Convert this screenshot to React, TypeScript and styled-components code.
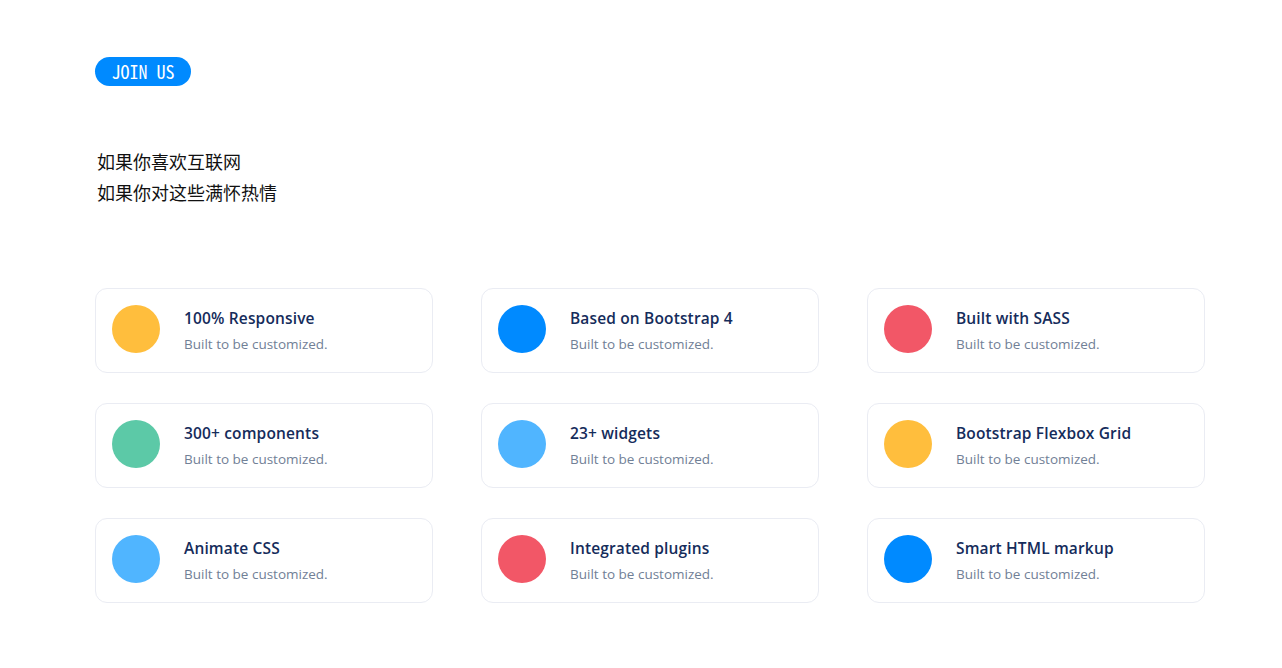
import React from "react";
import styled, { createGlobalStyle } from "styled-components";

const GlobalStyle = createGlobalStyle`
  html, body { margin: 0; padding: 0; background: #ffffff; }
  body { font-family: "Open Sans", "Noto Sans", sans-serif; }
`;

const Page = styled.div`
  padding: 57px 77px 40px 95px;
  box-sizing: border-box;
  width: 1282px;
`;

const Badge = styled.span`
  display: inline-flex;
  align-items: center;
  justify-content: center;
  height: 29px;
  width: 96px;
  box-sizing: border-box;
  border-radius: 15px;
  background: #008aff;
  color: #ffffff;
  font-family: "Noto Sans Mono CJK SC", "DejaVu Sans Mono", monospace;
  font-size: 18px;
  line-height: 27px;
`;

const Intro = styled.div`
  margin-top: 60px;
  padding-left: 2px;
  font-family: "Noto Sans CJK SC", "Noto Sans", sans-serif;
  font-size: 18px;
  line-height: 31px;
  color: #111111;
`;

const Grid = styled.div`
  margin-top: 80px;
  display: grid;
  grid-template-columns: repeat(3, 338px);
  column-gap: 48px;
  row-gap: 30px;
`;

const Card = styled.div`
  display: flex;
  align-items: flex-start;
  gap: 24px;
  height: 85px;
  box-sizing: border-box;
  padding: 16px;
  border: 1px solid #eaecf3;
  border-radius: 12px;
  background: #fff;
`;

const Dot = styled.div<{ $color: string }>`
  width: 48px;
  height: 48px;
  border-radius: 50%;
  flex: none;
  background: ${(p) => p.$color};
`;

const Body = styled.div`
  display: flex;
  flex-direction: column;
`;

const Title = styled.div`
  margin-top: 2px;
  font-size: 15.5px;
  line-height: 22px;
  font-weight: 600;
  letter-spacing: 0.15px;
  color: #152c5b;
`;

const Sub = styled.div`
  margin-top: 5px;
  font-size: 13.5px;
  line-height: 21px;
  color: #718096;
`;

const C = {
  yellow: "#ffbe3d",
  blue: "#008aff",
  red: "#f25767",
  green: "#5cc9a7",
  sky: "#50b5ff",
};

const items = [
  { t: "100% Responsive", c: C.yellow },
  { t: "Based on Bootstrap 4", c: C.blue },
  { t: "Built with SASS", c: C.red },
  { t: "300+ components", c: C.green },
  { t: "23+ widgets", c: C.sky },
  { t: "Bootstrap Flexbox Grid", c: C.yellow },
  { t: "Animate CSS", c: C.sky },
  { t: "Integrated plugins", c: C.red },
  { t: "Smart HTML markup", c: C.blue },
];

export default function App() {
  return (
    <>
      <GlobalStyle />
      <Page>
        <Badge>JOIN US</Badge>
        <Intro>
          <div>如果你喜欢互联网</div>
          <div>如果你对这些满怀热情</div>
        </Intro>
        <Grid>
          {items.map((it) => (
            <Card key={it.t}>
              <Dot $color={it.c} />
              <Body>
                <Title>{it.t}</Title>
                <Sub>Built to be customized.</Sub>
              </Body>
            </Card>
          ))}
        </Grid>
      </Page>
    </>
  );
}
